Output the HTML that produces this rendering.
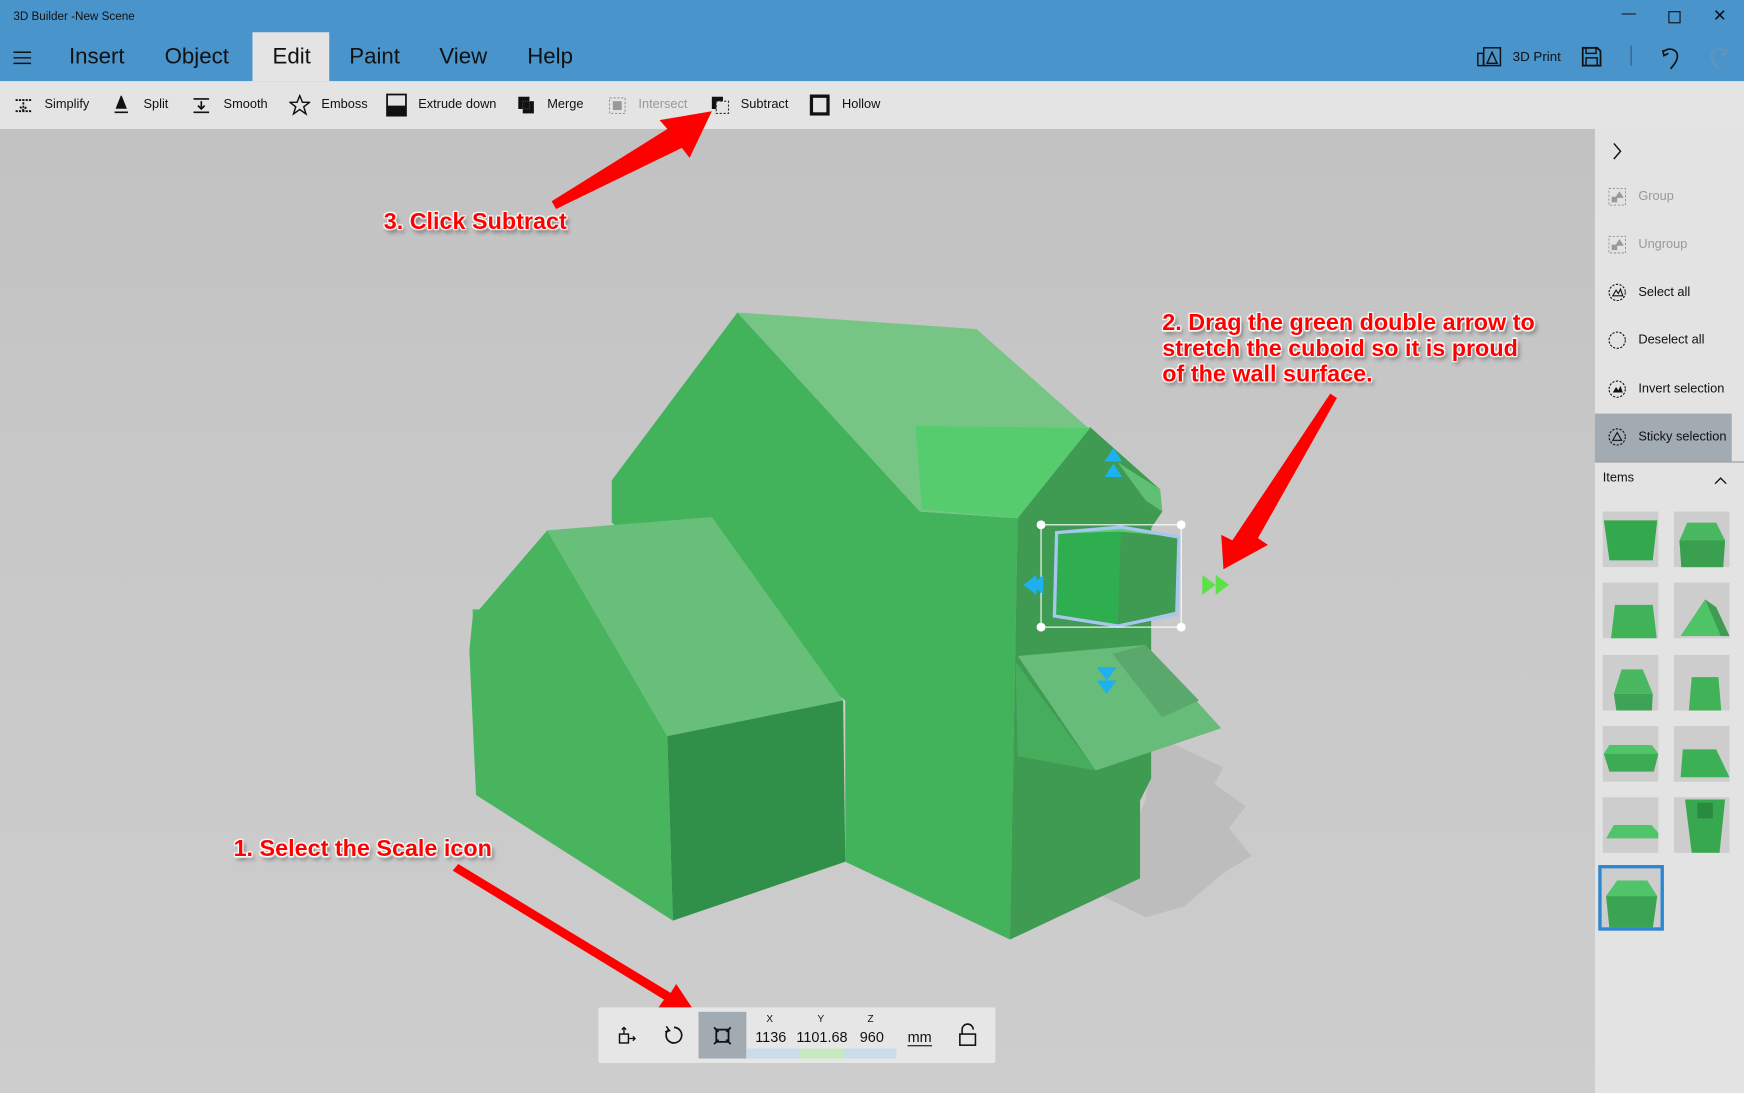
<!DOCTYPE html>
<html><head><meta charset="utf-8">
<style>
html,body{margin:0;padding:0;width:1744px;height:1093px;overflow:hidden;background:#c6c6c6;}
#s{position:absolute;left:0;top:0;width:1568px;height:983px;transform:scale(1.11224,1.11190);transform-origin:0 0;font-family:"Liberation Sans",sans-serif;overflow:hidden;}
.a{position:absolute;}
#title{left:0;top:0;width:1568px;height:73px;background:#4a94cc;}
.tab{position:absolute;top:40px;font-size:20px;color:#111;}
#tb{left:0;top:73px;width:1568px;height:43px;background:#e4e4e4;}
.ti{position:absolute;top:88px;font-size:11.5px;color:#111;}
#vp{left:0;top:116px;width:1434px;height:867px;background:linear-gradient(#c2c2c2,#c8c8c8 40%,#cdcdcd);}
#rp{left:1434px;top:116px;width:134px;height:867px;background:#e3e3e3;border-right:11px solid #e3e3e3;}
.ri{position:absolute;left:1473px;font-size:11.5px;color:#111;}
.th{position:absolute;width:50px;height:50px;background:#cdcdcd;}
.lbl{position:absolute;font-weight:bold;color:#f00;font-size:21px;text-shadow:0 0 2px #fff,1px 1px 1px #fff,-1px -1px 1px #fff,1px -1px 1px #fff,-1px 1px 1px #fff,2px 3px 4px rgba(0,0,0,.5);line-height:23px;}
</style></head><body>
<div id="s">
<div id="title" class="a"></div>
<div class="a" style="left:12px;top:9px;font-size:10.5px;color:#111">3D Builder -New Scene</div>
<div class="a" style="left:1458px;top:4px;font-size:13px;color:#111">&#8212;</div>
<div class="a" style="left:1500px;top:10px;width:9px;height:9px;border:1px solid #111"></div>
<div class="a" style="left:1540px;top:5px;font-size:15px;color:#111">&#10005;</div>
<svg class="a" style="left:12px;top:46px" width="16" height="12"><path d="M0 1h16M0 6h16M0 11h16" stroke="#111" stroke-width="1.3"/></svg>
<div class="tab" style="left:62px">Insert</div>
<div class="tab" style="left:148px">Object</div>
<div class="a" style="left:227px;top:29px;width:69px;height:44px;background:#e4e4e4"></div>
<div class="tab" style="left:245px">Edit</div>
<div class="tab" style="left:314px">Paint</div>
<div class="tab" style="left:395px">View</div>
<div class="tab" style="left:474px">Help</div>
<svg class="a" style="left:1328px;top:42px" width="22" height="18"><rect x="0.7" y="6" width="5" height="11" fill="none" stroke="#111" stroke-width="1.3"/><rect x="6" y="1" width="15" height="16" fill="none" stroke="#111" stroke-width="1.3"/><path d="M13.5 5L9 15h9z" fill="none" stroke="#111" stroke-width="1.3"/></svg>
<div class="a" style="left:1360px;top:44px;font-size:12px;color:#111">3D Print</div>
<svg class="a" style="left:1422px;top:42px" width="18" height="18"><path d="M1 1h13l3 3v13H1z" fill="none" stroke="#111" stroke-width="1.6"/><rect x="4" y="1" width="9" height="5" fill="none" stroke="#111" stroke-width="1.3"/><rect x="4" y="10" width="10" height="7" fill="none" stroke="#111" stroke-width="1.3"/></svg>
<div class="a" style="left:1466px;top:41px;width:1px;height:18px;background:#2a5a80"></div>
<svg class="a" style="left:1493px;top:41px" width="18" height="22"><path d="M3 5c6-4 13-1 12 6-1 5-4 7-6 10M2 4l1 5 4-2" fill="none" stroke="#111" stroke-width="1.5"/></svg>
<svg class="a" style="left:1536px;top:41px" width="18" height="22"><path d="M15 5c-6-4-13-1-12 6 1 5 4 7 6 10M16 4l-1 5-4-2" fill="none" stroke="#6b93b5" stroke-width="1.5"/></svg>

<div id="tb" class="a"></div>
<svg class="a" style="left:13px;top:87px" width="16" height="16"><path d="M1 3h14M1 13h14M8 5v6M5 9l3 3 3-3" stroke="#111" stroke-width="1.6" fill="none" stroke-dasharray="2 1"/></svg>
<div class="ti" style="left:40px">Simplify</div>
<svg class="a" style="left:102px;top:86px" width="14" height="17"><path d="M7 1L3 11h8zM1 15h12" stroke="#111" fill="#111" stroke-width="1.5"/></svg>
<div class="ti" style="left:129px">Split</div>
<svg class="a" style="left:173px;top:87px" width="16" height="16"><path d="M1 2h14M1 14h14M8 4v7M5 8l3 3 3-3" stroke="#111" stroke-width="1.5" fill="none"/></svg>
<div class="ti" style="left:201px">Smooth</div>
<svg class="a" style="left:260px;top:85px" width="19" height="19"><path d="M9.5 1l2.4 6h6.4l-5.2 4 2 6.5-5.6-4-5.6 4 2-6.5-5.2-4h6.4z" fill="none" stroke="#111" stroke-width="1.3"/></svg>
<div class="ti" style="left:289px">Emboss</div>
<svg class="a" style="left:347px;top:84px" width="19" height="21"><rect x="1" y="1" width="17" height="19" fill="none" stroke="#111" stroke-width="1.6"/><rect x="1" y="11" width="17" height="9" fill="#111"/></svg>
<div class="ti" style="left:376px">Extrude down</div>
<svg class="a" style="left:465px;top:86px" width="16" height="17"><rect x="1" y="1" width="10" height="11" fill="#111"/><rect x="5" y="5" width="10" height="11" fill="#111"/><path d="M5 5h6v7H5z" fill="none" stroke="#555" stroke-width=".8" stroke-dasharray="1 1"/></svg>
<div class="ti" style="left:492px">Merge</div>
<svg class="a" style="left:547px;top:87px" width="16" height="16"><rect x="1" y="1" width="14" height="14" fill="none" stroke="#999" stroke-dasharray="2 1.5"/><rect x="4" y="4" width="8" height="8" fill="#999"/></svg>
<div class="ti" style="left:574px;color:#999">Intersect</div>
<svg class="a" style="left:639px;top:86px" width="17" height="17"><path d="M1 1h10v4H5v7H1z" fill="#111"/><rect x="5" y="5" width="11" height="11" fill="none" stroke="#333" stroke-dasharray="2 1.5"/></svg>
<div class="ti" style="left:666px">Subtract</div>
<svg class="a" style="left:728px;top:85px" width="18" height="19"><rect x="1.5" y="1.5" width="15" height="16" fill="none" stroke="#111" stroke-width="3"/></svg>
<div class="ti" style="left:757px">Hollow</div>

<div id="vp" class="a"></div>
<svg class="a" style="left:0;top:0" width="1434" height="983">
 <polygon points="1035,660 1100,690 1092,705 1120,725 1105,745 1125,770 1100,785 1065,815 1030,825 990,805 1030,720" fill="#bdbdbd"/>
 <polygon points="663,281 550,432 550,470 760,630 760,775 908,845 915,466 827,460" fill="#42b35a"/>
 <polygon points="663,281 878,296 1043,442 980,384 915,466 827,460" fill="#76c585"/>
 <polygon points="980,384 1043,440 1045,460 1035,475 1035,700 1025,720 1025,790 908,845 915,466" fill="#3f9a52"/>
 <polygon points="1005,416 1043,440 1045,460 1030,450" fill="#5fc073"/>
 <polygon points="823,383 980,385 915,466 829,458" fill="#56cc6f"/>
 <polygon points="913,595 985,693 915,680" fill="#45ad5b"/>
 <polygon points="915,590 1030,580 1098,655 985,693" fill="#67bc79"/>
 <polygon points="1000,588 1030,580 1078,630 1045,645" fill="#5aa86b"/>
 <polygon points="425,548 448,548 440,562 425,562" fill="#3fc060"/>
 <polygon points="492,477 425,555 422,585 428,715 605,828 600,662" fill="#48b55e"/>
 <polygon points="492,477 640,465 758,630 600,662" fill="#67bf79"/>
 <polygon points="600,662 758,630 760,775 605,828" fill="#30904a"/>
 <polygon points="950,480 1008,476 1005,562 948,553" fill="#2fae4f"/>
 <polygon points="1008,476 1060,483 1058,550 1005,562" fill="#3f9a52"/>
 <polygon points="950,480 1008,474 1060,483 1006,478" fill="#5ad075"/>
 <polygon points="950,479 1008,474 1060,483 1058,552 1005,563 948,554" fill="none" stroke="#a7c6ee" stroke-width="3"/>
 <rect x="936" y="472" width="126" height="92" fill="none" stroke="#fff" stroke-width="1"/>
 <g fill="#fff"><circle cx="936" cy="472" r="4"/><circle cx="1062" cy="472" r="4"/><circle cx="936" cy="564" r="4"/><circle cx="1062" cy="564" r="4"/></g>
 <g fill="#1eb0f0"><path d="M1001,403 l-8,12 h16z M1001,417 l-8,12 h16z"/><path d="M920,526 l12,-9 v18z M928,526 l10,-9 v18z"/><path d="M995,600 l-9,0 9,12 9,-12z M995,612 l-9,0 9,12 9,-12z"/></g>
 <g fill="#5ee04a"><path d="M1081,517 l12,9 -12,9z M1093,517 l12,9 -12,9z"/></g>
 <polygon points="496,181 600,116 593,108 640,100 620,142 613,133 500,188" fill="#f00"/>
 <polygon points="1196,354 1108,486 1098,481 1100,512 1140,490 1131,484 1202,358" fill="#f00"/>
 <polygon points="407,783 597,899 590,909 632,921 608,885 603,893 412,777" fill="#f00"/>
</svg>
<div class="lbl" style="left:345px;top:188px">3. Click Subtract</div>
<div class="lbl" style="left:1045px;top:279px">2. Drag the green double arrow to<br>stretch the cuboid so it is proud<br>of the wall surface.</div>
<div class="lbl" style="left:210px;top:752px">1. Select the Scale icon</div>

<div class="a" style="left:538px;top:906px;width:357px;height:50px;background:#e6e6e6;border-radius:2px"></div>
<div class="a" style="left:628px;top:910px;width:43px;height:42px;background:#a2aab2"></div>
<div class="a" style="left:671px;top:943px;width:48px;height:9px;background:#c9dce8"></div>
<div class="a" style="left:719px;top:943px;width:40px;height:9px;background:#c8e8c0"></div>
<div class="a" style="left:759px;top:943px;width:47px;height:9px;background:#c9dce8"></div>
<svg class="a" style="left:555px;top:922px" width="18" height="20"><rect x="2" y="8" width="8" height="8" fill="none" stroke="#111" stroke-width="1.3"/><path d="M6 8V2M4 4l2-2 2 2M10 12h6M14 10l2 2-2 2" fill="none" stroke="#111" stroke-width="1.2"/></svg>
<svg class="a" style="left:597px;top:922px" width="18" height="18"><path d="M4 4a7 7 0 1 0 5-2" fill="none" stroke="#111" stroke-width="1.5"/><path d="M2 1l3 4-4 1" fill="none" stroke="#111" stroke-width="1.3"/></svg>
<svg class="a" style="left:641px;top:923px" width="17" height="17"><rect x="3" y="3" width="11" height="11" fill="none" stroke="#111" stroke-width="1.6"/><path d="M1 1l4 4M16 1l-4 4M1 16l4-4M16 16l-4-4" stroke="#111" stroke-width="1.6"/></svg>
<div class="a" style="left:689px;top:911px;font-size:9px;color:#111">X</div>
<div class="a" style="left:735px;top:911px;font-size:9px;color:#111">Y</div>
<div class="a" style="left:780px;top:911px;font-size:9px;color:#111">Z</div>
<div class="a" style="left:679px;top:925px;font-size:13px;color:#111">1136</div>
<div class="a" style="left:716px;top:925px;font-size:13px;color:#111">1101.68</div>
<div class="a" style="left:773px;top:925px;font-size:13px;color:#111">960</div>
<div class="a" style="left:816px;top:925px;font-size:13px;color:#111;border-bottom:1px solid #111;line-height:15px">mm</div>
<svg class="a" style="left:861px;top:920px" width="18" height="22"><path d="M4 10V6a5 5 0 0 1 10 0" fill="none" stroke="#111" stroke-width="1.4"/><rect x="2" y="10" width="14" height="10" fill="none" stroke="#111" stroke-width="1.4"/></svg>

<div id="rp" class="a"></div>
<svg class="a" style="left:1449px;top:128px" width="10" height="16"><path d="M2 1l6 7-6 7" fill="none" stroke="#111" stroke-width="1.3"/></svg>
<svg class="a" style="left:1446px;top:169px" width="16" height="16"><rect x="0.5" y="0.5" width="15" height="15" fill="none" stroke="#999" stroke-dasharray="2 1.5"/><path d="M3 8h5v5H3zM10 3l4 6H6z" fill="#999"/></svg>
<div class="ri" style="top:171px;color:#999">Group</div>
<svg class="a" style="left:1446px;top:212px" width="16" height="16"><rect x="0.5" y="0.5" width="15" height="15" fill="none" stroke="#999" stroke-dasharray="2 1.5"/><path d="M3 8h5v5H3zM10 3l4 6H6z" fill="#999"/></svg>
<div class="ri" style="top:214px;color:#999">Ungroup</div>
<svg class="a" style="left:1446px;top:255px" width="16" height="16"><circle cx="8" cy="8" r="7.3" fill="none" stroke="#111" stroke-dasharray="2 1.3"/><path d="M4 11l3-5 2 3 2-4 2 6z" fill="none" stroke="#111"/></svg>
<div class="ri" style="top:257px">Select all</div>
<svg class="a" style="left:1446px;top:298px" width="16" height="16"><circle cx="8" cy="8" r="7.3" fill="none" stroke="#111" stroke-dasharray="2 1.3"/></svg>
<div class="ri" style="top:300px">Deselect all</div>
<svg class="a" style="left:1446px;top:342px" width="16" height="16"><circle cx="8" cy="8" r="7.3" fill="none" stroke="#111" stroke-dasharray="2 1.3"/><path d="M4 11l3-5 2 3 2-4 2 6z" fill="#111"/></svg>
<div class="ri" style="top:344px">Invert selection</div>
<div class="a" style="left:1434px;top:372px;width:123px;height:43px;background:#a2aab2"></div>
<div class="a" style="left:1434px;top:415px;width:134px;height:1px;background:#999"></div>
<svg class="a" style="left:1446px;top:385px" width="16" height="16"><circle cx="8" cy="8" r="7.3" fill="none" stroke="#111" stroke-dasharray="2 1.3"/><path d="M8 4l4 7H4z" fill="none" stroke="#111"/></svg>
<div class="ri" style="top:387px">Sticky selection</div>
<div class="a" style="left:1441px;top:424px;font-size:11.5px;color:#111">Items</div>
<svg class="a" style="left:1541px;top:428px" width="12" height="8"><path d="M1 7l5-5 5 5" fill="none" stroke="#111" stroke-width="1.2"/></svg>

<div class="th" style="left:1441px;top:460px"><svg width="50" height="50"><polygon points="1,8 49,8 45,44 6,44" fill="#33a84c"/></svg></div>
<div class="th" style="left:1505px;top:460px"><svg width="50" height="50"><polygon points="12,10 38,10 46,26 44,55 7,55 5,26" fill="#4ab860"/><polygon points="5,26 46,26 44,55 7,55" fill="#3aa050"/></svg></div>
<div class="th" style="left:1441px;top:524px"><svg width="50" height="50"><polygon points="11,20 45,20 49,54 7,54" fill="#40b258"/></svg></div>
<div class="th" style="left:1505px;top:524px"><svg width="50" height="50"><polygon points="28,15 6,48 42,48" fill="#4ec466"/><polygon points="28,15 42,48 50,48 38,22" fill="#3d9e52"/></svg></div>
<div class="th" style="left:1441px;top:589px"><svg width="50" height="50"><polygon points="17,13 36,13 45,35 10,35" fill="#4ab860"/><polygon points="10,35 45,35 44,55 13,55" fill="#3fa355"/></svg></div>
<div class="th" style="left:1505px;top:589px"><svg width="50" height="50"><polygon points="16,20 40,20 43,55 13,55" fill="#40b258"/></svg></div>
<div class="th" style="left:1441px;top:653px"><svg width="50" height="50"><polygon points="6,17 44,17 50,25 46,41 6,41 1,25" fill="#3dab54"/><polygon points="6,17 44,17 50,25 1,25" fill="#4fc468"/></svg></div>
<div class="th" style="left:1505px;top:653px"><svg width="50" height="50"><polygon points="8,21 38,21 50,46 6,46" fill="#3bb055"/></svg></div>
<div class="th" style="left:1441px;top:717px"><svg width="50" height="50"><polygon points="10,25 44,25 54,37 3,37" fill="#4fc468"/></svg></div>
<div class="th" style="left:1505px;top:717px"><svg width="50" height="50"><polygon points="10,2 46,2 41,50 16,50" fill="#38a850"/><rect x="21" y="5" width="14" height="14" fill="#2a8a40"/></svg></div>
<div class="a" style="left:1437px;top:778px;width:53px;height:53px;border:3px solid #2b87d3;background:#cdcdcd"><svg width="53" height="53"><polygon points="14,11 41,11 50,25 46,54 7,54 4,25" fill="#3aa453"/><polygon points="14,11 41,11 50,25 4,25" fill="#4fc468"/></svg></div>
</div>
</body></html>
